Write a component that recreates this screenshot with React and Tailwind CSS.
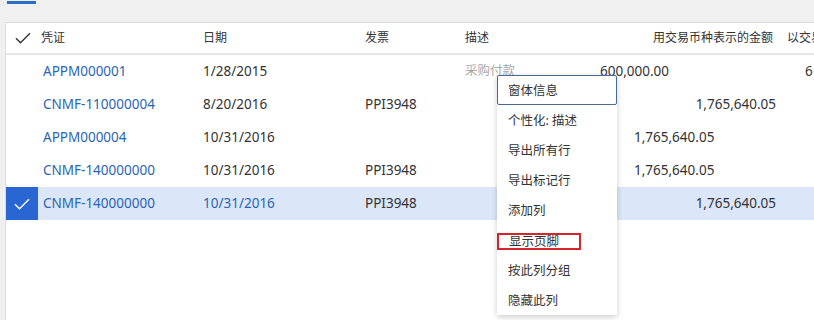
import React from "react";

const rows = [
  { v: "APPM000001", d: "1/28/2015", inv: "", desc: "采购付款", amt: "600,000.00", amtCls: "pl-[23px] text-left", extra: "6" },
  { v: "CNMF-110000004", d: "8/20/2016", inv: "PPI3948", desc: "", amt: "1,765,640.05", amtCls: "pr-[3px] text-right", extra: "" },
  { v: "APPM000004", d: "10/31/2016", inv: "", desc: "", amt: "1,765,640.05", amtCls: "pl-[57px] text-left", extra: "" },
  { v: "CNMF-140000000", d: "10/31/2016", inv: "PPI3948", desc: "", amt: "1,765,640.05", amtCls: "pl-[57px] text-left", extra: "" },
  { v: "CNMF-140000000", d: "10/31/2016", inv: "PPI3948", desc: "", amt: "1,765,640.05", amtCls: "pr-[3px] text-right", extra: "", sel: true },
];

const menu = ["窗体信息", "个性化: 描述", "导出所有行", "导出标记行", "添加列", "显示页脚", "按此列分组", "隐藏此列"];

function Check({ className }) {
  return (
    <svg width="16" height="12" viewBox="0 0 16 12" className={className} fill="none">
      <path d="M1 6.2 L5.5 10.8 L15 1.2" stroke="currentColor" strokeWidth="1.4" />
    </svg>
  );
}

export default function App() {
  return (
    <div
      className="w-[814px] h-[320px] overflow-hidden bg-[#f0f0f0] text-[#333]"
      style={{ fontFamily: '"Noto Sans", "Noto Sans CJK SC", sans-serif' }}
    >
      <div className="h-[22px] pt-[1px]">
        <div className="ml-[7px] w-[29px] h-[3px] bg-[#2b6cc4]" />
      </div>
      <div className="relative ml-[5px] h-[298px] bg-white border-l border-t border-[#dcdcdc] overflow-hidden">
        <div className="flex h-[32px] items-center border-b-2 border-[#e6e6e6] text-[12px] text-[#333] whitespace-nowrap">
          <div className="w-[32px] shrink-0 flex justify-center pl-[1px] text-[#333]">
            <Check />
          </div>
          <div className="w-[162px] shrink-0 pl-[3px]">凭证</div>
          <div className="w-[162px] shrink-0 pl-[3px]">日期</div>
          <div className="w-[100px] shrink-0 pl-[3px]">发票</div>
          <div className="w-[115px] shrink-0 pl-[3px]">描述</div>
          <div className="w-[202px] shrink-0 text-right pr-[6px]">用交易币种表示的金额</div>
          <div className="shrink-0 pl-[8px]">以交易币种表示的金额</div>
        </div>
        {rows.map((r, i) => (
          <div
            key={i}
            className={`flex h-[33px] items-center whitespace-nowrap text-[13.5px] ${r.sel ? "bg-[#dbe6f8]" : ""}`}
          >
            <div className={`w-[32px] shrink-0 h-[33px] flex items-center justify-center ${r.sel ? "bg-[#2a66d3] text-white" : ""}`}>
              {r.sel && <Check />}
            </div>
            <div className="w-[162px] shrink-0 pl-[5px] text-[#2a65b2]">{r.v}</div>
            <div className={`w-[162px] shrink-0 pl-[3px] ${r.sel ? "text-[#2a65b2]" : "text-[#333]"}`}>{r.d}</div>
            <div className="w-[100px] shrink-0 pl-[3px]">{r.inv}</div>
            <div className="w-[115px] shrink-0 pl-[3px] text-[12.5px] text-[#a8a8a8]">{r.desc}</div>
            <div className={`w-[202px] shrink-0 ${r.amtCls}`}>{r.amt}</div>
            <div className="shrink-0 pl-[26px]">{r.extra}</div>
          </div>
        ))}
        <div className="absolute left-[491px] top-[52px] w-[120px] bg-white shadow-[0_2px_6px_rgba(0,0,0,0.2)] text-[12.5px] text-[#333]">
          {menu.map((m, i) => (
            <div key={i} className={`h-[30px] flex items-center pt-[2px] ${i === 0 ? "border border-[#4a6a95] rounded-[2px] pl-[10px]" : "pl-[11px]"}`}>
              {i === 5 ? (
                <span className="-ml-[11px] pl-[10px] w-[84px] h-[17px] leading-[13px] border-2 border-[#d6262c]">{m}</span>
              ) : (
                m
              )}
            </div>
          ))}
        </div>
      </div>
    </div>
  );
}
